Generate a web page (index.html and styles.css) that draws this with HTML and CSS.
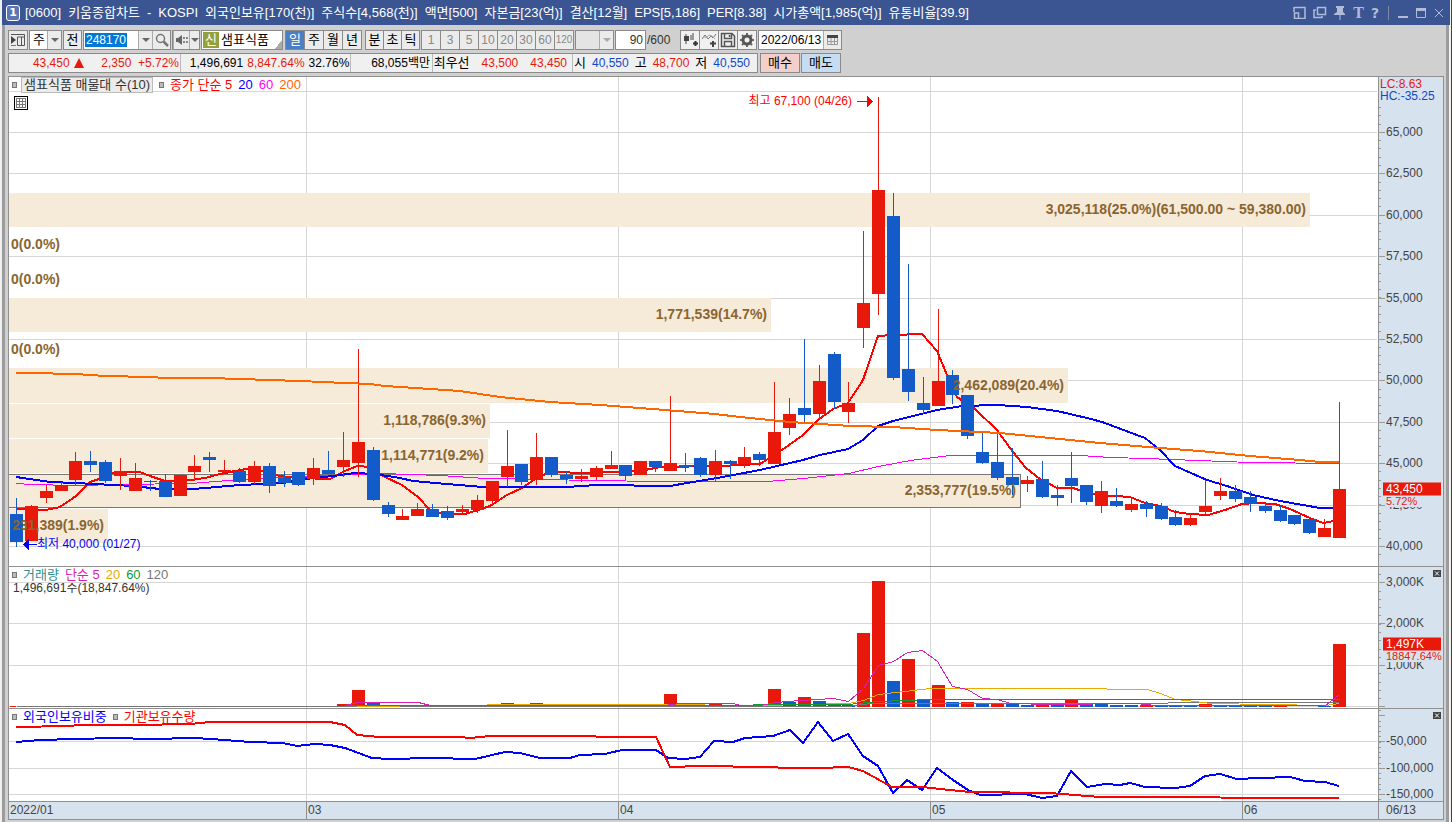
FILE: index.html
```html
<!DOCTYPE html>
<html lang="ko">
<head>
<meta charset="utf-8">
<title>키움종합차트</title>
<link rel="stylesheet" href="styles.css">
</head>
<body>
<div class="window">
  <header class="titlebar">
    <span class="badge">1</span>
    <h1 class="title"><span>[0600]</span><span>키움종합차트</span><span>-</span><span>KOSPI</span><span>외국인보유[170(천)]</span><span>주식수[4,568(천)]</span><span>액면[500]</span><span>자본금[23(억)]</span><span>결산[12월]</span><span>EPS[5,186]</span><span>PER[8.38]</span><span>시가총액[1,985(억)]</span><span>유통비율[39.9]</span></h1>
    <div class="winbtns">
      <button aria-label="화면 축소"><svg width="13" height="13"><path d="M1 1.500H12V12.500H6M1 1V6M1.500 7H5.500V12.500H1.500Z" fill="none" stroke="currentColor" stroke-width="1.500"/></svg></button>
      <button aria-label="화면 복사"><svg width="14" height="13"><path d="M4.500 1.500H12.500V8.500H4.500ZM3 4H1V11.500H9V10" fill="none" stroke="currentColor" stroke-width="1.500"/></svg></button>
      <button aria-label="고정"><svg width="12" height="14"><path d="M2 0H10V2H9V6L11 8V9H6.500V14H5.500V9H0V8L3 6V2H2Z" fill="currentColor"/></svg></button>
      <button class="serif" aria-label="글꼴">T</button>
      <button class="mark" aria-label="도움말">?</button>
      <i class="bar"></i>
      <button aria-label="최소화"><svg width="11" height="12"><path d="M0 9H10V11H0Z" fill="currentColor"/></svg></button>
      <button aria-label="최대화"><svg width="11" height="12"><path d="M.5 1.500H9.500V10.500H.5Z" fill="none" stroke="currentColor"/><path d="M0 1H10V4H0Z" fill="currentColor"/></svg></button>
      <button aria-label="닫기"><svg width="10" height="12"><path d="M1 2L9 10M9 2L1 10" stroke="currentColor"/></svg></button>
    </div>
  </header>

  <main class="body">
    <div class="tools">
      <button class="box sq" aria-label="메뉴"><svg width="16" height="14"><path d="M1 3L6 7L1 11Z" fill="#444"/><path d="M1 1.500H14.500V12.500H7.500V4H14M11.500 4V12" fill="none" stroke="#555"/><path d="M1 12.500H6" stroke="#777"/></svg></button>
      <span class="box combo w33"><select aria-label="종류"><option>주</option></select><i class="arrow"></i></span>
      <button class="box prev">전</button>
      <span class="box combo w88"><input class="code" aria-label="종목코드" value="248170"><button class="arrow" aria-label="목록"></button><button class="find" aria-label="검색"><svg width="14" height="14"><circle cx="5.500" cy="5.500" r="4" fill="none" stroke="#777" stroke-width="1.500"/><path d="M8.500 8.500L13 13" stroke="#777" stroke-width="2.500"/></svg></button></span>
      <span class="box combo w28"><button class="spk" aria-label="음성"><svg width="14" height="14"><path d="M1 5H3L7 2V12L3 9H1Z" fill="#666"/><path d="M9 4V6M9 8V10M12 4V6M12 8V10" stroke="#666" stroke-width="1.500"/></svg></button><button class="arrow small" aria-label="음성 설정"></button></span>
      <span class="box name"><b>신</b><em>샘표식품</em></span>
      <div class="seg period"><button class="on">일</button><button>주</button><button>월</button><button>년</button></div>
      <div class="seg intra"><button>분</button><button>초</button><button>틱</button></div>
      <div class="seg dim"><button>1</button><button>3</button><button>5</button><button>10</button><button>20</button><button>30</button><button>60</button><button class="tight">120</button></div>
      <span class="box combo off w39"><select aria-label="직접입력" disabled><option></option></select><i class="arrow"></i></span>
      <label class="count"><input value="90" aria-label="봉 개수">/600</label>
      <div class="seg icons">
        <button aria-label="차트 유형"><svg width="17" height="16"><path d="M4 2V12M11 1V8" stroke="#444"/><path d="M2 4H7V9H2Z" fill="#444"/><path d="M8 3H12V8H8Z" fill="#999"/><path d="M11 11.500H16M13.500 9V14" stroke="#333" stroke-width="2"/></svg></button>
        <button aria-label="지표 추가"><svg width="17" height="16"><path d="M1 7L4 3L7 7L10 4L12 6L15 2" fill="none" stroke="#777"/><path d="M2 4L5 6L8 3L11 4L14 7" fill="none" stroke="#aaa"/><path d="M9 11.500H15M12 9V15" stroke="#444" stroke-width="2"/></svg></button>
        <button aria-label="저장"><svg width="16" height="16"><path d="M1.500 1.500H12L14.500 4V14.500H1.500ZM4.500 2V6.500H11.500V2M4.500 14V9.500H11.500V14M9.500 3V5" fill="none" stroke="#555" stroke-width="1.500"/></svg></button>
        <button aria-label="설정"><svg width="16" height="16"><circle cx="8" cy="8" r="4" fill="none" stroke="#555" stroke-width="3"/><path d="M8 1V3M8 13V15M1 8H3M13 8H15M3 3L4.500 4.500M11.500 11.500L13 13M13 3L11.500 4.500M3 13L4.500 11.500" stroke="#666" stroke-width="2"/></svg></button>
      </div>
      <span class="box combo date"><input aria-label="날짜" value="2022/06/13"><button class="find" aria-label="달력"><svg width="13" height="12"><path d="M1 1H12V4H1Z" fill="#444"/><path d="M1.500 4V10.500H11.500V4M1 7.500H12M5 4V10M8.500 4V10" fill="none" stroke="#999"/></svg></button></span>
    </div>

    <div class="quotes">
      <div class="panel">
        <div class="cell c1 up"><span class="n60">43,450</span><svg class="tri" width="10" height="10"><path d="M5 0L10 10H0Z" fill="currentColor"/></svg><span class="n48">2,350</span><span class="n48">+5.72%</span></div>
        <div class="cell c2"><span>1,496,691</span><span class="up">8,847.64%</span><span>32.76%</span></div>
        <div class="cell c3"><span>68,055백만</span></div>
        <div class="cell c4"><span class="ko">최우선</span><span class="up">43,500</span><span class="up">43,450</span></div>
        <div class="cell c5"><span class="ko">시</span><span class="dn">40,550</span><span class="ko">고</span><span class="up">48,700</span><span class="ko">저</span><span class="dn">40,550</span></div>
      </div>
      <button class="buy">매수</button>
      <button class="sell">매도</button>
    </div>

    <section class="chart">
      <div class="pane" id="price">
        <div class="legend"><i></i><span class="tag">샘표식품 매물대 수(10)</span><i></i><span class="c-red">종가 단순 5</span><span class="c-blue">20</span><span class="c-mag">60</span><span class="c-or">200</span></div>
        <button class="gridbtn" aria-label="표 보기"><svg width="14" height="14" shape-rendering="crispEdges"><path d="M.5 .5H13.500V13.500H.5Z" fill="#fff" stroke="#000"/><path d="M2.500 2.500H11.500V11.500H2.500ZM2 5.500H12M2 8.500H12M5.500 2V12M8.500 2V12" fill="none" stroke="#777"/></svg></button>
      </div>
      <div class="axis" id="price-axis"><p class="lchc"><span class="up">LC:8.63</span><span class="dn">HC:-35.25</span></p></div>
      <div class="pane" id="volume">
        <div class="legend"><i></i><span class="c-teal">거래량</span><span class="c-pink">단순 5</span><span class="c-gold">20</span><span class="c-green">60</span><span class="c-gray">120</span></div>
        <p class="sub">1,496,691주(18,847.64%)</p>
      </div>
      <div class="axis" id="volume-axis"><button class="close" aria-label="거래량 닫기"><svg width="8" height="7"><path d="M2 1.500L6 5.500M6 1.500L2 5.500" stroke="#fff"/></svg></button></div>
      <div class="pane" id="holding">
        <div class="legend"><i></i><span class="c-blue">외국인보유비중</span><i></i><span class="c-red">기관보유수량</span></div>
      </div>
      <div class="axis" id="holding-axis"><button class="close" aria-label="보유 닫기"><svg width="8" height="7"><path d="M2 1.500L6 5.500M6 1.500L2 5.500" stroke="#fff"/></svg></button></div>
      <div class="time" id="time"></div>
      <div class="time last">06/13</div>
    </section>
  </main>
</div>
<script src="chart.js"></script>
</body>
</html>
```
FILE: styles.css
```css
* { box-sizing: border-box; }
body {
  margin: 0;
  background: #f0f0f0;
  color: #000;
  font: 12px/16px "Liberation Sans", "Noto Sans CJK KR", sans-serif;
}
button, input, select { font: inherit; color: inherit; margin: 0; padding: 0; border: 0; border-radius: 0; }
button { display: flex; align-items: center; justify-content: center; background: none; }
h1, p { margin: 0; }
svg { display: block; flex: none; }

.window {
  height: 100vh;
  display: flex;
  flex-direction: column;
  padding: 0 1px 0 2px;
  border-right: 1px solid #444;
}
.titlebar {
  flex: none;
  height: 25px;
  display: flex;
  align-items: center;
  gap: 5px;
  padding: 0 6px 0 4px;
  background: #3a5592;
  color: #fff;
}
.badge {
  width: 14px;
  height: 16px;
  border: 1px solid #fff;
  border-radius: 3px;
  background: #5a76b4;
  font: bold 11px/14px "DejaVu Sans", sans-serif;
  text-align: center;
}
.title { display: flex; gap: 7px; font-size: 13px; font-weight: 400; white-space: nowrap; }
.winbtns { margin-left: auto; display: flex; align-items: center; gap: 7px; color: #b0bcd8; }
.serif { font: bold 16px/16px "Liberation Serif", serif; }
.mark { font: bold 14px/16px "DejaVu Sans", sans-serif; }
.bar { width: 1px; height: 14px; margin: 0 2px; background: #7e88a0; }

.body {
  flex: 1;
  min-height: 0;
  display: flex;
  flex-direction: column;
  margin-right: 1px;
  padding: 5px 2px 2px 3px;
  border-left: 3px solid #9c9c9c;
  border-right: 3px solid #9c9c9c;
  background: #d0d0d0;
}
.tools, .quotes { flex: none; display: flex; gap: 1px; padding-bottom: 3px; white-space: nowrap; }
.box { height: 20px; border: 1px solid #8a8a8a; background: #ebebeb; }
.sq { width: 20px; }
.prev { width: 19px; font-size: 13px; }
.combo { display: flex; background: #fff; }
.combo select { appearance: none; flex: 1; min-width: 0; padding-left: 3px; background: none; opacity: 1; font-size: 13px; }
.arrow { flex: none; width: 14px; border-left: 1px solid #aaa; background: #ebebeb; display: flex; align-items: center; justify-content: center; }
.arrow::after { content: ""; border: 4px solid transparent; border-top-color: #666; border-bottom: 0; }
.off { background: #e4e4e4; }
.off .arrow::after { border-top-color: #aaa; }
.small { width: 10px; }
.w33 { width: 33px; }
.w88 { width: 88px; }
.w28 { width: 28px; }
.w39 { width: 39px; }
.code {
  width: 54px;
  padding-left: 2px;
  color: #fff;
  background: linear-gradient(#0078d7, #0078d7) 1px 2px / 42px 14px no-repeat, #fff;
}
.find, .spk { flex: 1; border-left: 1px solid #aaa; background: #ebebeb; }
.name { width: 82px; display: flex; gap: 2px; padding: 1px; font-size: 13px; background: linear-gradient(135deg, transparent 50%, #aaa 50%) right bottom / 8px 8px no-repeat, #fff; }
.name b { width: 16px; background: #93a03c; color: #fff; font-weight: 400; text-align: center; }
.name em { font-style: normal; }
.seg { display: flex; height: 20px; border: 1px solid #8a8a8a; border-right: 0; background: #ebebeb; }
.seg button { width: 19px; border-right: 1px solid #8a8a8a; }
.seg .on { background: #4a7fc4; color: #fff; }
.period, .intra { font-size: 13px; }
.period { margin-left: 1px; }
.intra { margin-left: 2px; }
.intra button { width: 18px; }
.dim { color: #888; }
.dim .tight { font-size: 10px; }
.count { display: flex; align-items: center; width: 64px; color: #333; }
.count input { width: 31px; height: 20px; margin-right: 1px; padding-right: 2px; border: 1px solid #8a8a8a; text-align: right; background: #fff; }
.icons button { background: #f0f0f0; }
.date { width: 84px; }
.date input { width: 64px; padding-left: 2px; }

.up { color: #e8190a; }
.dn { color: #1148c8; }
.panel { display: flex; width: 750px; height: 20px; border: 1px solid #8a8a8a; background: #f0f0f0; }
.cell { display: flex; align-items: center; justify-content: flex-end; padding: 0 1px; }
.cell + .cell { border-left: 1px solid #bbb; }
.ko { font-size: 13px; }
.c1 { width: 171px; }
.c2 { width: 171px; gap: 4px; }
.c3 { width: 82px; padding-right: 2px; }
.c4 { width: 140px; gap: 12px; padding-right: 5px; }
.c5 { flex: 1; gap: 6px; padding-right: 7px; }
.n60 { width: 60px; text-align: right; }
.n48 { width: 48px; text-align: right; }
.tri { margin-left: 4px; }
.quotes .buy, .quotes .sell { width: 40px; height: 20px; border: 1px solid #8a8a8a; font-size: 13px; }
.quotes .buy { background: #f4cfca; margin-left: 1px; }
.quotes .sell { background: #c6dcf2; }

.chart {
  flex: 1;
  min-height: 0;
  display: grid;
  grid-template-columns: minmax(0, 1fr) 64px;
  grid-template-rows: minmax(0, 489fr) minmax(0, 141fr) minmax(0, 92fr) 17px;
  gap: 1px;
  border: 1px solid #909090;
  background: #909090;
}
.pane { position: relative; overflow: hidden; background: #fff; }
.axis { position: relative; overflow: hidden; background: #d7e2ef; color: #444; }
.plot { position: absolute; inset: 0; width: 100%; height: 100%; shape-rendering: crispEdges; }
.line { fill: none; vector-effect: non-scaling-stroke; }
.legend { position: absolute; z-index: 1; top: 0; left: 3px; display: flex; align-items: center; gap: 6px; height: 16px; white-space: nowrap; font-size: 13px; }
.legend i { width: 5px; height: 6px; border: 1px solid #777; background: #bbb; }
.tag { margin-left: -2px; padding: 0 2px; border: 1px solid #bbb; background: #ebebeb; line-height: 14px; color: #333; }
.sub { position: absolute; top: 13px; left: 4px; color: #333; }
.gridbtn { position: absolute; z-index: 1; top: 19px; left: 5px; }
.c-red { color: #f00; }
.c-blue { color: #00f; }
.c-mag { color: #f0f; }
.c-or { color: #f60; }
.c-teal { color: #2c9090; }
.c-pink { color: #d81fb8; }
.c-gold { color: #eaaa00; }
.c-green { color: #109a30; }
.c-gray { color: #777; }
.note { position: absolute; z-index: 1; white-space: nowrap; transform: translateY(-50%); }
.note.end { transform: translate(-100%, -50%); }
.band { font: bold 14px/16px "Liberation Sans", sans-serif; color: #8a6530; }
.tick { position: absolute; left: 7px; transform: translateY(-50%); }
.now { position: absolute; left: 4px; right: 2px; transform: translateY(-50%); height: 13px; line-height: 13px; padding-left: 3px; background: #e8190a; color: #fff; }
.rate { position: absolute; left: 7px; right: 0; transform: translateY(-50%); color: #e8190a; background: #d7e2ef; height: 12px; font-size: 11px; line-height: 12px; }
.lchc { position: absolute; top: 1px; left: 1px; display: grid; line-height: 12px; }
.close { position: absolute; z-index: 1; top: 3px; right: 2px; background: #444; }
.time { position: relative; overflow: hidden; background: #d7e2ef; color: #444; line-height: 16px; }
.time span { position: absolute; padding-left: 1px; border-left: 1px solid #909090; height: 100%; }
.time span:first-child { border-left-color: transparent; }
.last { padding-left: 7px; }
```
FILE: chart.js
```javascript
const LEFT = 9, WIDTH = 1369;
const RED = '#e8190a', BLUE = '#125bc9', GRID = '#d6d6d6', BAND = '#f6ead9';
const months = [[306, '03'], [618, '04'], [930, '05'], [1242, '06']];

// body top, body bottom, high, low; a leading 1 marks a rising day
const candles = [
  [0,514,542,498,547],[1,506,541,505,541],[1,491,498,485,503],[1,485,491,482,491],[1,461,480,452,485],
  [0,461,465,451,472],[0,462,481,460,483],[1,471,476,458,490],[1,478,491,463,491],[0,481,482,480,491],
  [0,481,497,474,497],[1,475,496,475,496],[1,466,472,455,481],[0,457,460,452,472],[1,470,472,460,472],
  [0,471,482,468,483],[1,466,482,461,484],[0,466,486,463,493],[0,478,483,471,487],[0,472,485,472,486],
  [1,468,479,458,485],[0,470,474,451,474],[1,460,467,432,477],[1,442,463,349,477],[0,450,500,447,501],
  [0,505,514,502,517],[1,516,520,509,520],[1,509,516,503,516],[0,509,517,504,517],[0,511,518,506,520],
  [1,509,512,505,513],[1,500,510,495,513],[1,481,501,481,505],[1,466,477,430,487],[0,464,482,464,485],
  [1,457,480,433,485],[0,457,475,457,477],[0,475,479,471,484],[1,476,479,469,482],[1,468,477,466,480],
  [1,465,469,451,469],[0,465,476,465,480],[1,461,475,461,475],[0,461,467,461,472],[1,463,471,396,471],
  [0,465,467,453,472],[0,458,475,457,477],[1,461,475,450,482],[0,461,464,460,479],[1,457,464,447,468],
  [0,454,460,452,466],[1,432,464,382,464],[1,414,428,398,435],[0,408,415,339,424],[1,381,414,365,420],
  [0,354,402,352,409],[1,403,412,382,423],[1,303,328,231,348],[1,190,294,97,315],[0,216,378,193,380],
  [0,369,392,264,401],[0,403,410,377,414],[1,381,406,309,406],[0,375,395,370,404],[0,395,436,395,439],
  [0,452,463,432,464],[0,462,478,432,480],[0,477,485,448,495],[1,480,484,476,492],[0,479,497,461,498],
  [0,495,498,485,506],[0,478,486,452,503],[0,485,502,485,505],[1,491,506,481,513],[0,501,506,488,507],
  [1,504,510,498,512],[0,504,509,501,517],[0,506,519,503,520],[0,517,525,510,526],[1,518,525,514,526],
  [1,506,512,480,515],[1,491,496,478,500],[0,491,499,485,502],[0,497,504,491,512],[0,506,511,503,513],
  [0,510,521,506,522],[0,515,524,515,525],[0,519,533,518,534],[1,528,537,519,537],[1,489,538,402,538]
];

// day index: [rising, bar top]
const volumes = {
  22:[1,704],23:[1,690],24:[0,703],33:[1,703],35:[1,703],44:[1,694],45:[0,706],46:[0,706],47:[1,704],48:[0,706],
  49:[1,706],50:[0,706],51:[1,689],52:[0,702],53:[1,697],54:[0,701],55:[0,705],56:[0,705],57:[1,633],58:[1,581],
  59:[0,681],60:[1,659],61:[0,699],62:[1,685],63:[0,702],64:[1,702],65:[0,703],66:[1,703],67:[0,703],68:[0,705],
  69:[1,705],70:[0,705],71:[1,700],72:[0,703],73:[0,703],74:[0,705],75:[0,705],76:[1,705],77:[0,706],78:[0,706],
  79:[0,706],80:[1,704],81:[0,706],82:[0,706],83:[0,706],84:[0,706],85:[1,706],88:[0,706],89:[1,644]
};

const bands = [
  [193,227,1310,'3,025,118(25.0%)(61,500.00 ~ 59,380.00)'],
  [298,332,771,'1,771,539(14.7%)'],
  [368,403,1068,'2,462,089(20.4%)'],
  [404,438,490,'1,118,786(9.3%)'],
  [439,473,488,'1,114,771(9.2%)'],
  [474,507,1020,'2,353,777(19.5%)'],
  [509,543,108,'231,389(1.9%)']
];

const priceLines = [
  ['#f0f', 1, '16,483 30,484 75,485 120,484 190,483 240,479 270,477 333,475 380,473 440,475 485,478 545,479 590,480 660,481 767,481 803,478 848,473 878,466 910,460 950,455 1080,455 1110,457 1145,458 1250,462 1339,463'],
  ['#f00', 2, '16,509 46,510 60,507 76,496 90,482 105,477 115,472 140,472 150,476 165,481 190,480 205,478 220,474 235,471 252,468 265,472 280,476 300,478 330,479 345,471 357,466 370,467 385,477 402,485 418,497 430,510 440,513 465,514 475,511 490,506 507,495 522,488 535,479 550,472 590,473 640,471 660,467 720,466 760,464 782,450 803,435 818,420 833,409 848,403 863,380 878,336 892,335 922,334 937,351 947,375 957,397 975,409 997,430 1013,452 1026,468 1040,479 1057,488 1073,488 1085,492 1100,495 1130,497 1145,503 1160,506 1175,512 1190,514 1208,515 1225,510 1242,504 1257,503 1275,504 1290,509 1310,518 1323,523 1339,520'],
  ['#00f', 2, '16,477 50,482 75,483 133,486 160,489 193,489 240,485 283,483 306,479 333,476 355,473 375,474 400,478 413,481 447,484 483,487 567,487 597,485 670,486 693,482 717,478 760,470 803,460 820,455 848,449 863,440 878,426 893,421 937,410 962,406 997,405 1027,407 1057,411 1087,418 1102,422 1145,438 1160,450 1175,466 1207,480 1227,486 1253,495 1280,501 1320,508 1339,508'],
  ['#f60', 2, '16,373 30,373 75,374 105,376 150,377 165,378 210,378 300,381 345,383 370,384 385,386 400,387 460,391 500,397 550,402 600,405 640,408 715,414 740,417 790,422 850,426 893,427 937,430 1000,433 1050,438 1100,443 1160,448 1200,451 1250,456 1300,460 1320,462 1339,462']
];
const volumeLines = [
  ['#777', 1, '16,706 848,706 870,703 1000,703 1339,702'],
  ['#eaaa00', 1, '357,706 530,704 648,704 760,705 848,703 863,700 878,694 930,688 1065,688 1147,689 1160,693 1175,699 1195,701 1210,703 1325,705 1339,703'],
  ['#109a30', 1, '345,705 660,705 848,704 878,701 930,699 1339,699'],
  ['#d81fb8', 1, '345,705 357,702 418,702 430,705 663,705 680,703 733,703 740,705 760,705 775,702 800,700 833,698 848,701 863,688 878,665 893,661 907,652 922,650 937,661 952,686 967,689 982,698 997,699 1010,703 1050,704 1135,703 1155,705 1325,705 1339,694']
];
const holdingLines = [
  ['#00f', 2, '16,742 40,740 75,739 115,738 150,739 195,738 225,740 250,742 283,743 297,746 315,744 330,745 345,748 372,758 390,759 430,758 475,759 505,752 520,753 540,758 570,758 580,755 605,754 622,750 656,750 668,758 685,759 700,757 714,741 733,742 745,738 773,736 790,730 803,743 818,722 833,741 848,734 863,756 878,766 893,793 907,780 922,790 937,768 953,780 968,790 980,795 1025,794 1042,798 1057,796 1071,771 1087,787 1105,784 1120,785 1130,783 1145,787 1175,788 1190,786 1205,776 1220,774 1237,779 1260,778 1290,777 1305,781 1325,782 1339,786'],
  ['#f00', 2, '16,727 68,726 80,725 135,725 190,724 210,722 330,722 345,725 357,735 380,737 460,737 470,738 490,736 535,736 656,737 670,767 700,766 765,767 790,768 818,768 848,767 863,771 892,787 922,787 950,790 970,792 1050,793 1075,795 1100,797 1339,798']
];

const rect = (x, y, w, h, fill) => `<rect x="${x}" y="${y}" width="${w}" height="${h}" fill="${fill}"/>`;
// thin lines run through pixel centres so that they stay unbroken
const line = ([color, w, points]) =>
  `<polyline class="line" stroke="${color}" stroke-width="${w}" points="${points}"${w === 1 ? ' transform="translate(0.5 0.5)"' : ''}/>`;
const barX = i => Math.round(10 + i * 14.865);

function grid(rows, top, height) {
  return rows.map(y => rect(LEFT, y, WIDTH - 1, 1, GRID)).join('') +
    months.map(([x]) => rect(x, top, 1, height, GRID)).join('');
}
function pane(id, top, height, shapes, notes = '') {
  document.getElementById(id).insertAdjacentHTML('beforeend',
    `<svg class="plot" viewBox="${LEFT} ${top} ${WIDTH} ${height}" preserveAspectRatio="none">${shapes}</svg>${notes}`);
}
function note(cls, x, y, top, height, text) {
  return `<span class="note ${cls}" style="left:${(x - LEFT) / WIDTH * 100}%;top:${(y - top) / height * 100}%">${text}</span>`;
}
function axis(id, top, height, major, minor, extra = '') {
  const marks = minor.map(y => rect(0, y, 2, 1, '#999')).join('') + major.map(([y]) => rect(0, y, 6, 1, '#999')).join('');
  const labels = major.filter(m => m[1]).map(([y, t]) =>
    `<span class="tick" style="top:${(y - top) / height * 100}%">${t}</span>`).join('');
  document.getElementById(id).insertAdjacentHTML('beforeend',
    `<svg class="plot" viewBox="0 ${top} 64 ${height}" preserveAspectRatio="none">${marks}</svg>${labels}${extra}`);
}
const steps = (from, to, step) => {
  const out = [];
  for (let y = from; y < to; y += step) out.push(Math.round(y));
  return out;
};

// price
const priceRows = [91,132,173,215,256,298,339,380,422,463,505,546];
let shapes = grid(priceRows, 77, 489);
bands.forEach(([a, b, end], i) => {
  shapes += rect(LEFT, a, end - LEFT, b - a, BAND);
  if (i === 3 || i === 4) shapes += rect(LEFT, a - 1, end - LEFT, 1, '#fff');
});
shapes += rect(LEFT, 474, 1012, 1, '#777') + rect(LEFT, 507, 1012, 1, '#777') + rect(1020, 474, 1, 33, '#777');
shapes += priceLines.slice(0, 3).map(line).join('');
candles.forEach(([up, a, b, hi, lo], i) => {
  const c = up ? RED : BLUE, x = barX(i);
  shapes += rect(x + 6, hi, 1, lo - hi, c) + rect(x, a, 13, Math.max(1, b - a), c);
});
shapes += line(priceLines[3]);
shapes += '<path d="M857 101H867V96L873 101.500L867 107V102H857Z" fill="#f00"/><path d="M37 544H29V539L23 544.500L29 550V545H37Z" fill="#00f"/>';
pane('price', 77, 489, shapes,
  bands.map(([a, b, end, t]) => note('band end', end - 4, (a + b) / 2 - 1, 77, 489, t)).join('') +
  [244, 279, 349].map(y => note('band', 11, y, 77, 489, '0(0.0%)')).join('') +
  note('c-red end', 852, 101, 77, 489, '최고 67,100 (04/26)') +
  note('c-blue', 37, 544, 77, 489, '최저 40,000 (01/27)'));
axis('price-axis', 77, 489,
  priceRows.slice(1).map((y, i) => [y, (65000 - i * 2500).toLocaleString('en-US')]),
  steps(107, 560, 8.28),
  `<span class="rate" style="top:${(501 - 77) / 489 * 100}%">5.72%</span><span class="now" style="top:${(488.5 - 77) / 489 * 100}%">43,450</span>`);

// volume
shapes = grid([582, 623, 665, 706], 567, 141) + rect(10, 706, 6, 1, RED);
for (const i in volumes) shapes += rect(barX(+i), volumes[i][1], 13, 707 - volumes[i][1], volumes[i][0] ? RED : BLUE);
pane('volume', 567, 141, shapes + volumeLines.map(line).join(''));
axis('volume-axis', 567, 141, [[582, '3,000K'], [623, '2,000K'], [665, '1,000K'], [706, '']], steps(574, 706, 8.28),
  `<span class="rate" style="top:${(656 - 567) / 141 * 100}%">18847.64%</span><span class="now" style="top:${(643.5 - 567) / 141 * 100}%">1,497K</span>`);

// holdings
pane('holding', 709, 92, grid([741, 768, 794], 709, 92) + holdingLines.map(line).join(''));
axis('holding-axis', 709, 92, [[715, ''], [741, '-50,000'], [768, '-100,000'], [794, '-150,000']], steps(710, 801, 5.25));

document.getElementById('time').innerHTML = [[8, '2022/01'], ...months].map(([x, t]) =>
  `<span style="left:${(x - LEFT) / WIDTH * 100}%">${t}</span>`).join('');
```
